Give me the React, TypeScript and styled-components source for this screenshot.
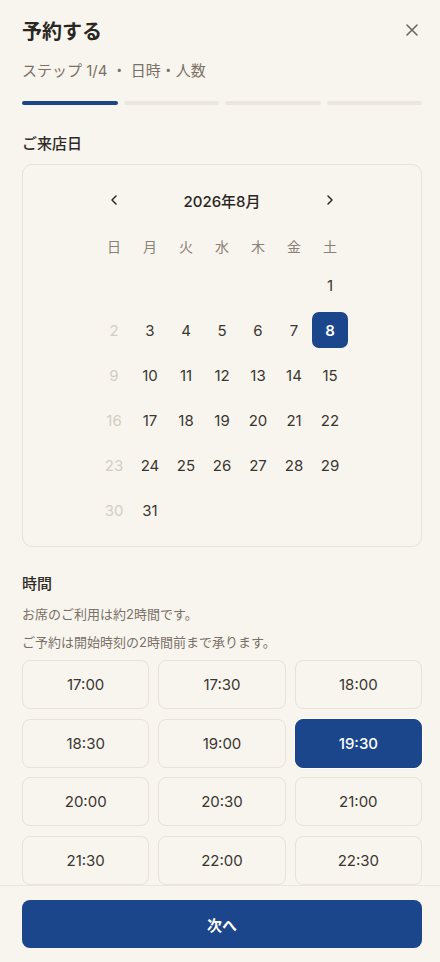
import React, { useState } from "react";
import styled, { createGlobalStyle } from "styled-components";

const Global = createGlobalStyle`
  html, body { margin: 0; padding: 0; background: #f8f5ef; }
  body { font-family: "Inter", "Noto Sans CJK JP", sans-serif; color: #2a2622; -webkit-font-smoothing: antialiased; }
  * { box-sizing: border-box; }
`;

const Sheet = styled.div`
  width: 440px;
  height: 962px;
  display: flex;
  flex-direction: column;
  background: #f8f5ef;
  overflow: hidden;
`;

const Scroll = styled.div`
  flex: 1;
  overflow: hidden;
  padding: 18px 18px 0 22px;
  display: flex;
  flex-direction: column;
`;

const HeaderRow = styled.div`
  display: flex;
  justify-content: space-between;
  align-items: flex-start;
`;

const Title = styled.h1`
  margin: 0;
  font-size: 20px;
  line-height: 28px;
  font-weight: 700;
  color: #2a2622;
`;

const CloseBtn = styled.button`
  border: none;
  background: none;
  padding: 0;
  margin-top: 2px;
  width: 20px;
  height: 20px;
  display: flex;
  align-items: center;
  justify-content: center;
  color: #6e6862;
  cursor: pointer;
`;

const Step = styled.div`
  margin-top: 14px;
  font-size: 15px;
  line-height: 22px;
  color: #7a7066;
`;

const Progress = styled.div`
  margin-top: 19px;
  width: 400px;
  display: grid;
  grid-template-columns: repeat(4, 1fr);
  gap: 6px;
`;

const Bar = styled.div<{ $active?: boolean }>`
  height: 4px;
  border-radius: 2px;
  background: ${(p) => (p.$active ? "#1b468c" : "#ece7de")};
`;

const SectionLabel = styled.h2`
  margin: 28px 0 0;
  font-size: 15px;
  line-height: 22px;
  font-weight: 500;
  color: #2f2a26;
`;

const Card = styled.div`
  margin-top: 9px;
  width: 400px;
  border: 1px solid #e8e2d7;
  border-radius: 10px;
  padding: 17px 0 18px;
  display: flex;
  justify-content: center;
`;

const Month = styled.div`
  width: 252px;
  display: flex;
  flex-direction: column;
`;

const MonthHead = styled.div`
  height: 36px;
  display: flex;
  align-items: center;
  justify-content: space-between;
`;

const NavBtn = styled.button`
  width: 36px;
  height: 36px;
  border: none;
  background: none;
  padding: 0;
  display: flex;
  align-items: center;
  justify-content: center;
  color: #2a2622;
  cursor: pointer;
`;

const MonthTitle = styled.div`
  font-size: 15px;
  font-weight: 500;
  color: #2a2622;
`;

const Grid = styled.div`
  display: grid;
  grid-template-columns: repeat(7, 36px);
  row-gap: 9px;
`;

const Weekday = styled.div`
  height: 20px;
  margin-top: 18px;
  margin-bottom: 2px;
  display: flex;
  align-items: center;
  justify-content: center;
  font-size: 14px;
  color: #8a8076;
`;

const Day = styled.button<{ $disabled?: boolean; $selected?: boolean }>`
  width: 36px;
  height: 36px;
  border: none;
  border-radius: 7px;
  padding: 0;
  font-family: inherit;
  font-size: 15px;
  font-weight: ${(p) => (p.$selected ? 600 : 400)};
  display: flex;
  align-items: center;
  justify-content: center;
  background: ${(p) => (p.$selected ? "#1b468c" : "transparent")};
  color: ${(p) => (p.$selected ? "#ffffff" : p.$disabled ? "#d3cdc4" : "#3a352f")};
  cursor: ${(p) => (p.$disabled ? "default" : "pointer")};
`;

const Empty = styled.div`
  width: 36px;
  height: 36px;
`;

const TimeLabel = styled(SectionLabel)`
  margin-top: 26px;
`;

const Note = styled.p<{ $first?: boolean }>`
  margin: ${(p) => (p.$first ? "8px" : "6px")} 0 0;
  font-size: 13px;
  line-height: 22px;
  color: #7a7066;
`;

const TimeGrid = styled.div`
  margin-top: 7px;
  width: 400px;
  display: grid;
  grid-template-columns: repeat(3, 1fr);
  column-gap: 9px;
  row-gap: 9.5px;
`;

const TimeBtn = styled.button<{ $selected?: boolean }>`
  height: 49px;
  border-radius: 8px;
  border: 1px solid ${(p) => (p.$selected ? "#1b468c" : "#e8e2d7")};
  background: ${(p) => (p.$selected ? "#1b468c" : "#f8f5ef")};
  color: ${(p) => (p.$selected ? "#ffffff" : "#3a352f")};
  box-shadow: ${(p) => (p.$selected ? "0 0 0 1px #ffffff" : "none")};
  font-family: inherit;
  font-size: 15px;
  font-weight: ${(p) => (p.$selected ? 500 : 400)};
  cursor: pointer;
`;

const Footer = styled.div`
  border-top: 1px solid #ece7de;
  padding: 14px 18px 14px 22px;
  background: #f8f5ef;
`;

const NextBtn = styled.button`
  width: 400px;
  height: 48px;
  border: none;
  border-radius: 8px;
  background: #1b468c;
  color: #ffffff;
  font-family: inherit;
  font-size: 15px;
  font-weight: 600;
  cursor: pointer;
`;

const Chevron = ({ dir }: { dir: "l" | "r" }) => (
  <svg width="16" height="16" viewBox="0 0 24 24" fill="none" stroke="currentColor" strokeWidth="2.2" strokeLinecap="round" strokeLinejoin="round">
    {dir === "l" ? <path d="M15 18l-6-6 6-6" /> : <path d="M9 18l6-6-6-6" />}
  </svg>
);

const weekdays = ["日", "月", "火", "水", "木", "金", "土"];
const times = ["17:00", "17:30", "18:00", "18:30", "19:00", "19:30", "20:00", "20:30", "21:00", "21:30", "22:00", "22:30"];

export default function App() {
  const [day, setDay] = useState(8);
  const [time, setTime] = useState("19:30");
  const cells: (number | null)[] = [null, null, null, null, null, null];
  for (let d = 1; d <= 31; d++) cells.push(d);

  return (
    <>
      <Global />
      <Sheet>
        <Scroll>
          <HeaderRow>
            <Title>予約する</Title>
            <CloseBtn aria-label="閉じる">
              <svg width="14" height="14" viewBox="0 0 14 14" fill="none" stroke="currentColor" strokeWidth="1.6" strokeLinecap="round">
                <path d="M2 2l10 10M12 2L2 12" />
              </svg>
            </CloseBtn>
          </HeaderRow>
          <Step>ステップ 1/4 ・ 日時・人数</Step>
          <Progress>
            <Bar $active />
            <Bar />
            <Bar />
            <Bar />
          </Progress>

          <SectionLabel>ご来店日</SectionLabel>
          <Card>
            <Month>
              <MonthHead>
                <NavBtn aria-label="前の月"><Chevron dir="l" /></NavBtn>
                <MonthTitle>2026年8月</MonthTitle>
                <NavBtn aria-label="次の月"><Chevron dir="r" /></NavBtn>
              </MonthHead>
              <Grid>
                {weekdays.map((w) => (
                  <Weekday key={w}>{w}</Weekday>
                ))}
                {cells.map((d, i) =>
                  d === null ? (
                    <Empty key={"e" + i} />
                  ) : (
                    <Day
                      key={d}
                      $disabled={i % 7 === 0}
                      $selected={d === day}
                      onClick={() => i % 7 !== 0 && setDay(d)}
                    >
                      {d}
                    </Day>
                  )
                )}
              </Grid>
            </Month>
          </Card>

          <TimeLabel>時間</TimeLabel>
          <Note $first>お席のご利用は約2時間です。</Note>
          <Note>ご予約は開始時刻の2時間前まで承ります。</Note>
          <TimeGrid>
            {times.map((t) => (
              <TimeBtn key={t} $selected={t === time} onClick={() => setTime(t)}>
                {t}
              </TimeBtn>
            ))}
          </TimeGrid>
        </Scroll>
        <Footer>
          <NextBtn>次へ</NextBtn>
        </Footer>
      </Sheet>
    </>
  );
}
